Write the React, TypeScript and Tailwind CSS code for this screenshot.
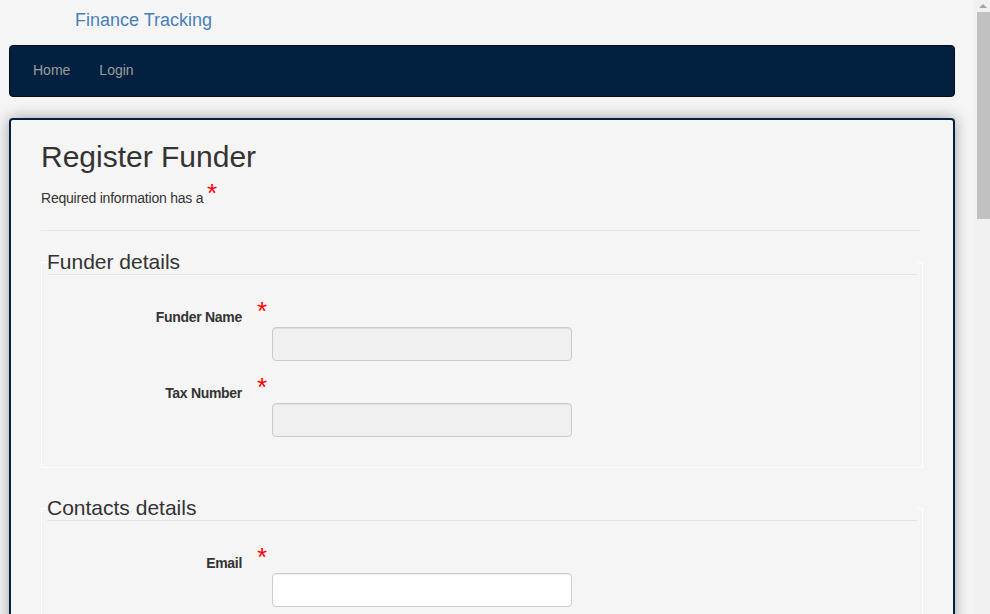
import React from 'react';

type Field = { label: string; value?: string; disabled?: boolean };

function Star({ className = '' }: { className?: string }) {
  return <span className={`text-[#ff0000] text-[26px] leading-[20px] tracking-normal ${className}`}>*</span>;
}

function FieldRow({ field }: { field: Field }) {
  return (
    <div className="mb-[22px] last:mb-0">
      <div className="flex h-[20px] items-start">
        <label className="w-[210px] pr-[15px] text-right font-bold leading-[20px] tracking-[-0.3px] text-[#333]">{field.label}</label>
        <Star className="relative top-[-6px]" />
      </div>
      <input
        type="text"
        disabled={field.disabled}
        className={`ml-[225px] block h-[34px] w-[300px] rounded-[4px] border border-[#cccccc] px-3 shadow-[inset_0_1px_1px_rgba(0,0,0,0.075)] ${
          field.disabled ? 'bg-[#f0f0f0]' : 'bg-white'
        }`}
      />
    </div>
  );
}

function Section({ title, fields, className = '' }: { title: string; fields: Field[]; className?: string }) {
  return (
    <fieldset className={`w-[882px] border border-white px-[5px] pb-[30px] ${className}`}>
      <legend className="w-full border-b border-[#e5e5e5] text-[21px] leading-[25px] text-[#333]">{title}</legend>
      <div className="pt-[32px]">
        {fields.map((f) => (
          <FieldRow key={f.label} field={f} />
        ))}
      </div>
    </fieldset>
  );
}

export default function App() {
  return (
    <div className="flex h-[614px] w-[990px] overflow-hidden bg-[#f5f5f5] font-['Liberation_Sans',Arial,sans-serif] text-[14px] text-[#333]">
      <div className="min-w-0 flex-1">
        {/* Brand */}
        <div className="h-[45px] pl-[75px] pt-[9px] text-[18px] leading-[22px] text-[#4a7ebb]">Finance Tracking</div>

        {/* Navbar */}
        <nav className="ml-[9px] flex h-[52px] w-[946px] items-center gap-[29px] rounded-[4px] border border-[#0b0b0b] bg-[#02203f] pb-px pl-[23px] text-[#9d9d9d]">
          <a>Home</a>
          <a>Login</a>
        </nav>

        {/* Card */}
        <div className="ml-[9px] mt-[21px] w-[946px] rounded-[4px] border-2 border-[#02203f] px-[30px] pt-[20px] pb-[40px] shadow-[0_0_15px_rgba(0,0,0,0.35)]">
          <h1 className="text-[30px] leading-[33px] text-[#333]">Register Funder</h1>
          <p className="mt-[15px] leading-[20px] tracking-[-0.22px]">
            Required information has a <Star className="relative top-[-5px] inline-block h-[20px] align-top" />
          </p>
          <div className="mt-[22px] h-px w-[880px] bg-[#e8e8e8]" />

          <Section
            className="mt-[18px]"
            title="Funder details"
            fields={[
              { label: 'Funder Name', disabled: true },
              { label: 'Tax Number', disabled: true },
            ]}
          />
          <Section className="mt-[27px]" title="Contacts details" fields={[{ label: 'Email' }]} />
        </div>
      </div>

      {/* Scrollbar */}
      <div className="flex w-[17px] shrink-0 flex-col bg-[#f1f1f1]">
        <div className="flex h-[12px] items-center justify-center pl-[3px]">
          <div className="h-0 w-0 border-x-[4px] border-b-[4px] border-x-transparent border-b-[#a3a3a3]" />
        </div>
        <div className="ml-[4px] h-[207px] w-[13px] bg-[#c1c1c1]" />
      </div>
    </div>
  );
}
